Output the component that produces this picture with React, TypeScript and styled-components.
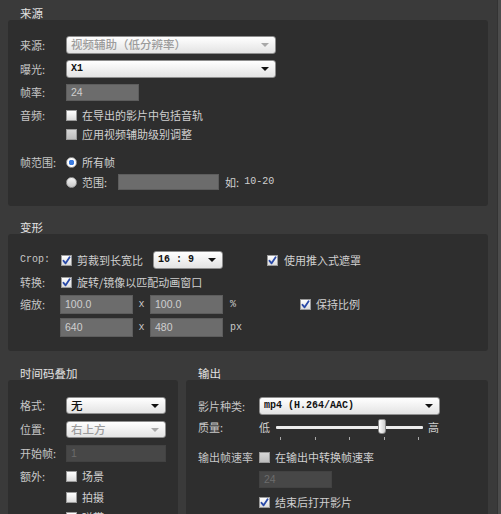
import React from "react";
import styled, { createGlobalStyle } from "styled-components";

const GlobalStyle = createGlobalStyle`
  html, body { margin: 0; padding: 0; background: #3a3a3a; }
  body {
    font-family: "Noto Sans CJK SC", "Noto Sans", sans-serif;
    font-size: 11px;
    color: #c9c9c9;
  }
`;

const Page = styled.div`
  width: 501px;
  height: 514px;
  overflow: hidden;
  display: flex;
  background: #3a3a3a;
`;

const Main = styled.div`
  width: 480px;
  margin-left: 8px;
  display: flex;
  flex-direction: column;
`;

const EdgeStrip = styled.div`
  width: 3px;
  margin-left: auto;
  background: #4c4c4c;
  border-left: 1px solid #333;
`;

const Section = styled.section<{ $mt?: number }>`
  display: flex;
  flex-direction: column;
  margin-top: ${(p) => p.$mt ?? 0}px;
  min-width: 0;
`;

const Title = styled.div`
  height: 20px;
  box-sizing: border-box;
  padding: 7px 0 1px 12px;
  line-height: 12px;
  font-size: 11.5px;
  color: #e2e2e2;
`;

const Panel = styled.div<{ $pt: number; $pb: number }>`
  background: #2e2e2e;
  border-radius: 3px;
  padding: ${(p) => p.$pt}px 12px ${(p) => p.$pb}px;
  display: flex;
  flex-direction: column;
`;

const Columns = styled.div`
  display: grid;
  grid-template-columns: 170px 302px;
  column-gap: 8px;
`;

const Row = styled.div<{ $h: number; $mt?: number }>`
  display: flex;
  align-items: center;
  height: ${(p) => p.$h}px;
  margin-top: ${(p) => p.$mt ?? 0}px;
  line-height: 1;
  white-space: nowrap;
`;

const Label = styled.span<{ $w: number; $mono?: boolean }>`
  width: ${(p) => p.$w}px;
  flex-shrink: 0;
  color: #c6c6c6;
  font-family: ${(p) =>
    p.$mono ? '"Liberation Mono", monospace' : '"Noto Sans CJK SC", sans-serif'};
  font-size: ${(p) => (p.$mono ? "10px" : "11px")};
`;

const Text = styled.span<{ $ml?: number; $dim?: boolean }>`
  margin-left: ${(p) => p.$ml ?? 0}px;
  color: ${(p) => (p.$dim ? "#9a9a9a" : "#d0d0d0")};
`;

const MonoText = styled.span<{ $ml?: number }>`
  margin-left: ${(p) => p.$ml ?? 0}px;
  font-family: "Liberation Mono", monospace;
  font-size: 10px;
  color: #cfcfcf;
`;

const SelectBox = styled.div<{ $w: number; $disabled?: boolean }>`
  width: ${(p) => p.$w}px;
  height: 100%;
  box-sizing: border-box;
  flex-shrink: 0;
  border-radius: 3px;
  border: 1px solid #8e8e8e;
  background: linear-gradient(#ffffff, #e3e3e3);
  display: flex;
  align-items: center;
  justify-content: space-between;
  padding: 0 6px 0 4px;
  color: ${(p) => (p.$disabled ? "#9c9c9c" : "#111")};
`;

const SelectValue = styled.span<{ $mono?: boolean }>`
  font-family: ${(p) =>
    p.$mono ? '"Liberation Mono", monospace' : '"Noto Sans CJK SC", sans-serif'};
  font-size: ${(p) => (p.$mono ? "10px" : "11.5px")};
  font-weight: ${(p) => (p.$mono ? 700 : 500)};
`;

const Arrow = styled.span<{ $disabled?: boolean }>`
  width: 0;
  height: 0;
  border-left: 4px solid transparent;
  border-right: 4px solid transparent;
  border-top: 4px solid ${(p) => (p.$disabled ? "#a8a8a8" : "#111")};
`;

const Field = styled.div<{ $w: number; $dim?: boolean; $ml?: number }>`
  width: ${(p) => p.$w}px;
  height: 100%;
  box-sizing: border-box;
  flex-shrink: 0;
  margin-left: ${(p) => p.$ml ?? 0}px;
  background: ${(p) => (p.$dim ? "#474747" : "#6c6c6c")};
  border: 1px solid ${(p) => (p.$dim ? "#424242" : "#5d5d5d")};
  color: ${(p) => (p.$dim ? "#6c6c6c" : "#cfcfcf")};
  display: flex;
  align-items: center;
  padding-left: 4px;
  font-family: "Liberation Sans", sans-serif;
  font-size: 10.5px;
`;

const Sep = styled.span<{ $w: number; $pl?: number; $center?: boolean }>`
  width: ${(p) => p.$w}px;
  flex-shrink: 0;
  box-sizing: border-box;
  padding-left: ${(p) => p.$pl ?? 0}px;
  text-align: ${(p) => (p.$center ? "center" : "left")};
  font-family: "Liberation Mono", monospace;
  font-size: 10px;
  color: #c8c8c8;
`;

const Box = styled.span<{ $disabled?: boolean; $ml?: number }>`
  width: 11px;
  height: 11px;
  box-sizing: border-box;
  flex-shrink: 0;
  margin-left: ${(p) => p.$ml ?? 0}px;
  border: 1px solid #9a9a9a;
  background: ${(p) =>
    p.$disabled ? "linear-gradient(#d6d6d6, #bdbdbd)" : "linear-gradient(#ffffff, #dcdcdc)"};
  display: flex;
  align-items: center;
  justify-content: center;
`;

const RadioDot = styled.span<{ $checked?: boolean }>`
  width: 11px;
  height: 11px;
  box-sizing: border-box;
  flex-shrink: 0;
  border-radius: 50%;
  border: 1px solid #9a9a9a;
  background: ${(p) =>
    p.$checked
      ? "radial-gradient(circle, #3a7be0 0 2.6px, #ffffff 3px)"
      : "linear-gradient(#f4f4f4, #c8c8c8)"};
`;

const SliderBox = styled.div`
  position: relative;
  width: 147px;
  height: 100%;
  margin: 0 5px 0 6px;
`;

const Track = styled.div`
  position: absolute;
  left: 0;
  right: 0;
  top: 7px;
  height: 3px;
  border-radius: 1px;
  background: #ececec;
`;

const Thumb = styled.div`
  position: absolute;
  top: 0;
  width: 8px;
  height: 15px;
  box-sizing: border-box;
  border: 1px solid #8a8a8a;
  border-radius: 2px 2px 3px 3px;
  background: linear-gradient(90deg, #ffffff, #cfcfcf);
`;

const Ticks = styled.div`
  position: absolute;
  top: 18px;
  left: 4px;
  right: 4px;
  display: flex;
  justify-content: space-between;
`;

const Tick = styled.span`
  width: 1px;
  height: 3px;
  background: #a8a8a8;
`;

const Check = ({ checked, disabled, ml }: { checked?: boolean; disabled?: boolean; ml?: number }) => (
  <Box $disabled={disabled} $ml={ml}>
    {checked && (
      <svg width="9" height="9" viewBox="0 0 9 9">
        <path d="M1.5 4.8 L3.6 7.3 L7.6 1.2" fill="none" stroke="#2a4aa8" strokeWidth="1.8" strokeLinecap="round" strokeLinejoin="round" />
      </svg>
    )}
  </Box>
);

const Select = ({ w, value, disabled, mono }: { w: number; value: string; disabled?: boolean; mono?: boolean }) => (
  <SelectBox $w={w} $disabled={disabled}>
    <SelectValue $mono={mono}>{value}</SelectValue>
    <Arrow $disabled={disabled} />
  </SelectBox>
);

const Slider = ({ value }: { value: number }) => (
  <SliderBox>
    <Track />
    <Thumb style={{ left: `${value * 147 - 4}px` }} />
    <Ticks>
      <Tick />
      <Tick />
      <Tick />
      <Tick />
      <Tick />
    </Ticks>
  </SliderBox>
);

export default function App() {
  return (
    <>
      <GlobalStyle />
      <Page>
        <Main>
          <Section>
            <Title>来源</Title>
            <Panel $pt={16} $pb={16}>
              <Row $h={18}>
                <Label $w={46}>来源:</Label>
                <Select w={210} value="视频辅助（低分辨率）" disabled />
              </Row>
              <Row $h={18} $mt={6}>
                <Label $w={46}>曝光:</Label>
                <Select w={210} value="X1" mono />
              </Row>
              <Row $h={17} $mt={6}>
                <Label $w={46}>帧率:</Label>
                <Field $w={73}>24</Field>
              </Row>
              <Row $h={17} $mt={6}>
                <Label $w={46}>音频:</Label>
                <Check />
                <Text $ml={5}>在导出的影片中包括音轨</Text>
              </Row>
              <Row $h={17} $mt={2}>
                <Label $w={46} />
                <Check disabled />
                <Text $ml={5}>应用视频辅助级别调整</Text>
              </Row>
              <Row $h={18} $mt={10}>
                <Label $w={46}>帧范围:</Label>
                <RadioDot $checked />
                <Text $ml={5}>所有帧</Text>
              </Row>
              <Row $h={16} $mt={3}>
                <Label $w={46} />
                <RadioDot />
                <Text $ml={5}>范围:</Text>
                <Field $w={101} $ml={11} />
                <Text $ml={6}>如:</Text>
                <MonoText $ml={5}>10-20</MonoText>
              </Row>
            </Panel>
          </Section>

          <Section $mt={8}>
            <Title>变形</Title>
            <Panel $pt={17} $pb={14}>
              <Row $h={18}>
                <Label $w={40} $mono>Crop:</Label>
                <Check checked ml={1} />
                <Text $ml={5}>剪裁到长宽比</Text>
                <SelectBox $w={70} style={{ marginLeft: 10 }}>
                  <SelectValue $mono>16 : 9</SelectValue>
                  <Arrow />
                </SelectBox>
                <Check checked ml={44} />
                <Text $ml={6}>使用推入式遮罩</Text>
              </Row>
              <Row $h={17} $mt={5}>
                <Label $w={40}>转换:</Label>
                <Check checked ml={1} />
                <Text $ml={5}>旋转/镜像以匹配动画窗口</Text>
              </Row>
              <Row $h={19} $mt={4}>
                <Label $w={40}>缩放:</Label>
                <Field $w={73}>100.0</Field>
                <Sep $w={17} $center>x</Sep>
                <Field $w={73}>100.0</Field>
                <Sep $w={77} $pl={7}>%</Sep>
                <Check checked />
                <Text $ml={5}>保持比例</Text>
              </Row>
              <Row $h={19} $mt={4}>
                <Label $w={40} />
                <Field $w={73}>640</Field>
                <Sep $w={17} $center>x</Sep>
                <Field $w={73}>480</Field>
                <Sep $w={40} $pl={7}>px</Sep>
              </Row>
            </Panel>
          </Section>

          <Columns>
            <Section $mt={9}>
              <Title>时间码叠加</Title>
              <Panel $pt={17} $pb={14}>
                <Row $h={17}>
                  <Label $w={46}>格式:</Label>
                  <Select w={100} value="无" />
                </Row>
                <Row $h={17} $mt={7}>
                  <Label $w={46}>位置:</Label>
                  <Select w={100} value="右上方" disabled />
                </Row>
                <Row $h={17} $mt={7}>
                  <Label $w={46}>开始帧:</Label>
                  <Field $w={100} $dim>1</Field>
                </Row>
                <Row $h={17} $mt={6}>
                  <Label $w={46}>额外:</Label>
                  <Check />
                  <Text $ml={5}>场景</Text>
                </Row>
                <Row $h={17} $mt={4}>
                  <Label $w={46} />
                  <Check />
                  <Text $ml={5}>拍摄</Text>
                </Row>
                <Row $h={17} $mt={3}>
                  <Label $w={46} />
                  <Check />
                  <Text $ml={5}>磁带</Text>
                </Row>
              </Panel>
            </Section>
            <Section $mt={9}>
              <Title>输出</Title>
              <Panel $pt={17} $pb={14}>
                <Row $h={18}>
                  <Label $w={61}>影片种类:</Label>
                  <Select w={181} value="mp4 (H.264/AAC)" mono />
                </Row>
                <Row $h={16} $mt={4}>
                  <Label $w={61}>质量:</Label>
                  <Text>低</Text>
                  <Slider value={0.72} />
                  <Text>高</Text>
                </Row>
                <Row $h={17} $mt={14}>
                  <Label $w={61}>输出帧速率</Label>
                  <Check disabled />
                  <Text $ml={5}>在输出中转换帧速率</Text>
                </Row>
                <Row $h={17} $mt={5}>
                  <Label $w={61} />
                  <Field $w={73} $dim>24</Field>
                </Row>
                <Row $h={17} $mt={6}>
                  <Label $w={61} />
                  <Check checked />
                  <Text $ml={5}>结束后打开影片</Text>
                </Row>
              </Panel>
            </Section>
          </Columns>
        </Main>
        <EdgeStrip />
      </Page>
    </>
  );
}
